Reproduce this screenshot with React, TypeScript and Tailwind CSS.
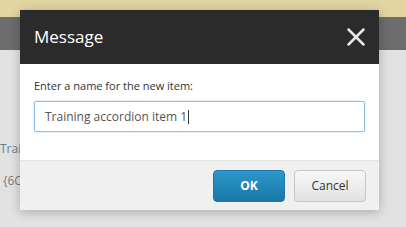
import { X } from "lucide-react";

export default function App() {
  return (
    <div className="relative h-[227px] w-[406px] overflow-hidden bg-[#e2e2e2] font-['Open_Sans',sans-serif]">
      {/* page behind the dialog */}
      <div className="h-[17px] bg-[#e3d5a1]" />
      <div className="h-[33px] bg-[#6c6c6c]" />
      <div className="pt-[93px] text-[12px] leading-none">
        <p className="text-[#62808a]">Training accordion item</p>
        <p className="mt-[20px] pl-[3px] text-[#7a7a7a]">{"{6C"}</p>
      </div>

      {/* dialog */}
      <div className="absolute left-[20px] top-[10px] w-[359px] shadow-[0_2px_10px_rgba(0,0,0,0.25)]">
        <div className="flex h-[54px] items-center justify-between bg-[#2b2b2b] pl-[14px] pr-[8px]">
          <h1 className="text-[17px] text-white">Message</h1>
          <X className="h-[30px] w-[30px] text-[#e8e8e8]" strokeWidth={2} />
        </div>
        <div className="h-[96px] bg-white px-[14px] pt-[14px]">
          <p className="text-[11px] leading-[16px] text-[#333]">Enter a name for the new item:</p>
          <div className="mt-[7px] flex h-[31px] items-center rounded-[2px] border border-[#8ec1ea] px-[10px] shadow-[0_0_2px_rgba(100,170,230,0.5)]">
            <span className="text-[12px] text-[#555]">Training accordion item 1</span>
            <span className="ml-[1px] h-[14px] w-px bg-[#333]" />
          </div>
        </div>
        <div className="flex h-[50px] items-center justify-end gap-[9px] border-t border-[#e4e4e4] bg-[#f0f0f0] pr-[13px]">
          <button className="h-[32px] w-[72px] rounded-[4px] border border-[#1a79a8] bg-gradient-to-b from-[#2b97cb] to-[#1a78a7] text-[12px] font-bold text-white">
            OK
          </button>
          <button className="h-[32px] w-[72px] rounded-[4px] border border-[#c6c6c6] bg-gradient-to-b from-[#f8f8f8] to-[#e2e2e2] text-[12px] text-[#333]">
            Cancel
          </button>
        </div>
      </div>
    </div>
  );
}
